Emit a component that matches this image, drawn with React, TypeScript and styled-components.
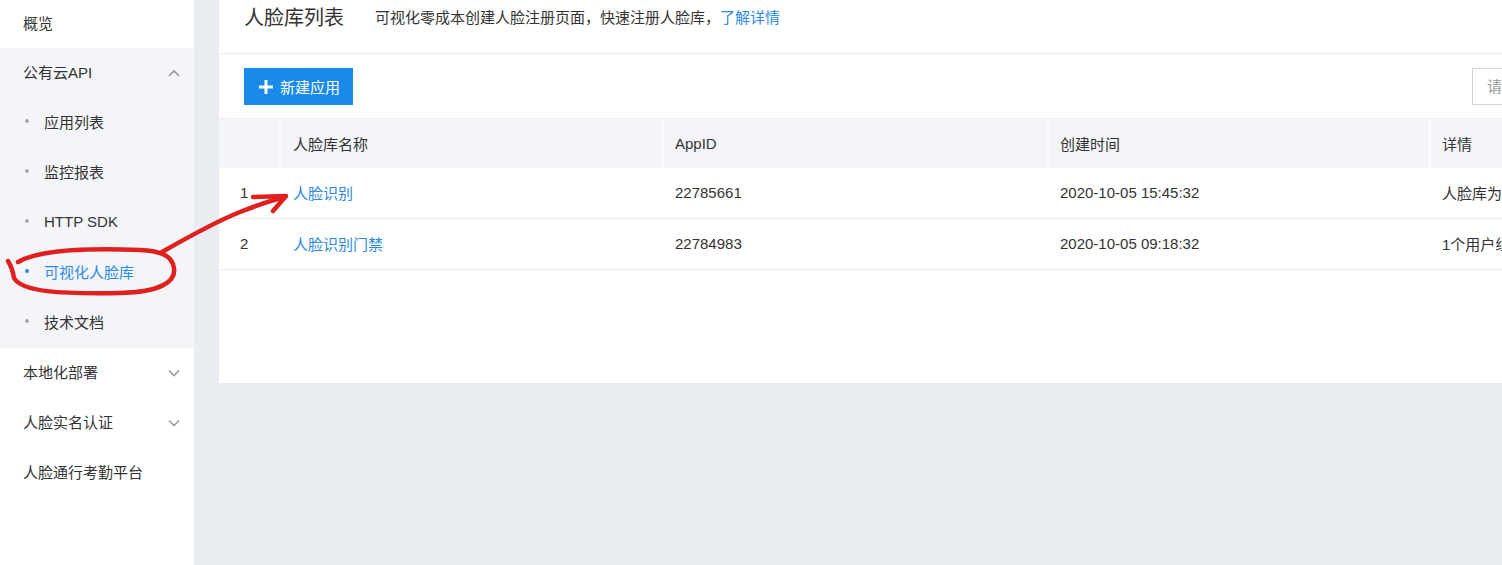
import React from "react";
import styled, { createGlobalStyle } from "styled-components";

const GlobalStyle = createGlobalStyle`
  html, body {
    margin: 0;
    padding: 0;
    overflow: hidden;
    background: #e9ecf0;
  }
  body {
    font-family: "Liberation Sans", "Noto Sans CJK SC", sans-serif;
    font-size: 15px;
    color: #333;
  }
`;

const Page = styled.div`
  position: relative;
  display: flex;
  width: 1502px;
  height: 565px;
  overflow: hidden;
`;

const Sidebar = styled.nav`
  flex: 0 0 194px;
  background: #fff;
  display: flex;
  flex-direction: column;
`;

const Group = styled.div<{ $open?: boolean }>`
  background: ${(p) => (p.$open ? "#f4f5f9" : "transparent")};
`;

const MenuItem = styled.div<{ $h?: number }>`
  height: ${(p) => p.$h ?? 50}px;
  box-sizing: border-box;
  display: flex;
  align-items: center;
  justify-content: space-between;
  padding: 0 14px 4px 23px;
  color: #333;
  svg {
    margin-top: 4px;
  }
`;

const SubItem = styled.div<{ $active?: boolean }>`
  height: 50px;
  box-sizing: border-box;
  display: flex;
  align-items: center;
  gap: 15px;
  padding: 0 0 4px 25px;
  color: ${(p) => (p.$active ? "#2b8ae0" : "#333")};
  &::before {
    content: "";
    width: 4px;
    height: 4px;
    border-radius: 50%;
    background: ${(p) => (p.$active ? "#2b8ae0" : "#a9abb0")};
  }
`;

const Chevron = ({ up }: { up?: boolean }) => (
  <svg width="12" height="8" viewBox="0 0 12 8">
    <polyline
      points={up ? "1,7 6,2 11,7" : "1,1.5 6,6.5 11,1.5"}
      fill="none"
      stroke="#9a9da3"
      strokeWidth="1.6"
    />
  </svg>
);

const Content = styled.main`
  flex: 1;
  padding-left: 25px;
  min-width: 0;
`;

const Panel = styled.section`
  width: 1480px;
  height: 383px;
  background: #fff;
`;

const Header = styled.header`
  height: 53px;
  border-bottom: 1px solid #e8eaee;
  display: flex;
  align-items: flex-start;
  gap: 31px;
  padding: 0 25px;
  line-height: 36px;
`;

const Title = styled.h1`
  margin: 0;
  font-size: 20px;
  font-weight: normal;
  line-height: 36px;
  color: #333;
`;

const Desc = styled.p`
  margin: 0;
  color: #333;
  a {
    color: #2b8ae0;
    text-decoration: none;
  }
`;

const Toolbar = styled.div`
  display: flex;
  justify-content: space-between;
  align-items: center;
  padding: 14px 27px 13px 25px;
`;

const PrimaryButton = styled.button`
  height: 37px;
  width: 109px;
  border: none;
  background: #1a8ae8;
  color: #fff;
  font: inherit;
  display: flex;
  align-items: center;
  gap: 7px;
  padding: 0 0 0 15px;
  cursor: pointer;
`;

const SearchInput = styled.input`
  width: 200px;
  height: 37px;
  box-sizing: border-box;
  border: 1px solid #d4d6db;
  padding: 0 14px;
  font: inherit;
  color: #333;
  &::placeholder {
    color: #999;
  }
`;

const Row = styled.div<{ $head?: boolean }>`
  display: grid;
  grid-template-columns: 60px 383px 385px 382px 1fr;
  height: ${(p) => (p.$head ? 50 : 51)}px;
  box-sizing: border-box;
  background: ${(p) => (p.$head ? "#f4f5f9" : "#fff")};
  border-top: ${(p) => (p.$head ? "1px solid #eceef2" : "none")};
  border-bottom: ${(p) => (p.$head ? "none" : "1px solid #e8eaee")};
`;

const Cell = styled.div<{ $head?: boolean; $link?: boolean; $index?: boolean }>`
  display: flex;
  align-items: center;
  padding: 0 0 1px ${(p) => (p.$index ? 21 : 13)}px;
  white-space: nowrap;
  overflow: hidden;
  color: ${(p) => (p.$link ? "#2b8ae0" : "#333")};
  box-shadow: ${(p) => (p.$head ? "inset 2px 0 0 #fbfbfd" : "none")};
  &:first-child {
    box-shadow: none;
  }
  &:nth-child(2) {
    padding-left: 14px;
  }
`;

const Overlay = styled.svg`
  position: absolute;
  left: 0;
  top: 0;
  pointer-events: none;
`;

const rows = [
  { name: "人脸识别", id: "22785661", time: "2020-10-05 15:45:32", info: "人脸库为人脸识别应用" },
  { name: "人脸识别门禁", id: "22784983", time: "2020-10-05 09:18:32", info: "1个用户组" },
];

export default function App() {
  return (
    <Page>
      <GlobalStyle />
      <Sidebar>
        <MenuItem $h={48}>概览</MenuItem>
        <Group $open>
          <MenuItem>
            公有云API
            <Chevron up />
          </MenuItem>
          <SubItem>应用列表</SubItem>
          <SubItem>监控报表</SubItem>
          <SubItem>HTTP SDK</SubItem>
          <SubItem $active>可视化人脸库</SubItem>
          <SubItem>技术文档</SubItem>
        </Group>
        <MenuItem>
          本地化部署
          <Chevron />
        </MenuItem>
        <MenuItem>
          人脸实名认证
          <Chevron />
        </MenuItem>
        <MenuItem>人脸通行考勤平台</MenuItem>
      </Sidebar>
      <Content>
        <Panel>
          <Header>
            <Title>人脸库列表</Title>
            <Desc>
              可视化零成本创建人脸注册页面，快速注册人脸库，<a href="#">了解详情</a>
            </Desc>
          </Header>
          <Toolbar>
            <PrimaryButton>
              <svg width="14" height="14" viewBox="0 0 14 14">
                <path d="M7 0v14M0 7h14" stroke="#fff" strokeWidth="3" />
              </svg>
              新建应用
            </PrimaryButton>
            <SearchInput placeholder="请输入人脸库名称" />
          </Toolbar>
          <Row $head>
            <Cell $head />
            <Cell $head>人脸库名称</Cell>
            <Cell $head>AppID</Cell>
            <Cell $head>创建时间</Cell>
            <Cell $head>详情</Cell>
          </Row>
          {rows.map((r, i) => (
            <Row key={r.id}>
              <Cell $index>{i + 1}</Cell>
              <Cell $link>{r.name}</Cell>
              <Cell>{r.id}</Cell>
              <Cell>{r.time}</Cell>
              <Cell>{r.info}</Cell>
            </Row>
          ))}
        </Panel>
      </Content>
      <Overlay width="1502" height="565" viewBox="0 0 1502 565">
        <g fill="none" stroke="#e01f1f" strokeWidth="4.5" strokeLinecap="round" strokeLinejoin="round">
          <path d="M8 261 C11 266 13 271 14 278 C22 292 60 294 120 293 C160 292 176 282 174 268 C172 255 160 251 140 250 C90 248 40 249 18 262" />
          <path d="M162 252 C190 236 215 222 240 212 C258 205 272 200 285 197" />
          <path d="M253 197 L286 196 L273 211" />
        </g>
      </Overlay>
    </Page>
  );
}
